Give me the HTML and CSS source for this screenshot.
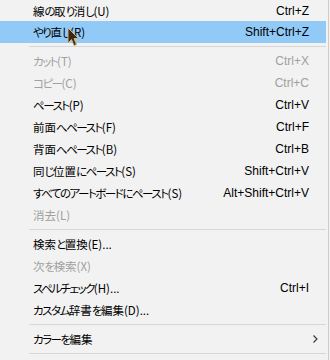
FILE: index.html
```html
<!DOCTYPE html>
<html lang="ja">
<head>
<meta charset="utf-8">
<link rel="stylesheet" href="styles.css">
</head>
<body>
<div class="menu">
  <ul class="items">
    <li class="item first"><span class="label">線<span class="k">の</span>取<span class="k">り</span>消<span class="k">し</span>(U)</span><span class="key">Ctrl+Z</span></li>
    <li class="item active"><span class="label"><span class="k">やり</span>直<span class="k">し</span>(R)</span><span class="key">Shift+Ctrl+Z</span></li>
    <li class="sep"></li>
    <li class="item disabled"><span class="label"><span class="k">カット</span>(T)</span><span class="key">Ctrl+X</span></li>
    <li class="item disabled"><span class="label"><span class="k">コピー</span>(C)</span><span class="key">Ctrl+C</span></li>
    <li class="item"><span class="label"><span class="k">ペースト</span>(P)</span><span class="key">Ctrl+V</span></li>
    <li class="item"><span class="label">前面<span class="k">へペースト</span>(F)</span><span class="key">Ctrl+F</span></li>
    <li class="item"><span class="label">背面<span class="k">へペースト</span>(B)</span><span class="key">Ctrl+B</span></li>
    <li class="item"><span class="label">同<span class="k">じ</span>位置<span class="k">にペースト</span>(S)</span><span class="key">Shift+Ctrl+V</span></li>
    <li class="item"><span class="label"><span class="k">すべてのアートボードにペースト</span>(S)</span><span class="key">Alt+Shift+Ctrl+V</span></li>
    <li class="item disabled"><span class="label">消去(L)</span></li>
    <li class="sep"></li>
    <li class="item"><span class="label">検索<span class="k">と</span>置換(E)...</span></li>
    <li class="item disabled"><span class="label">次<span class="k">を</span>検索(X)</span></li>
    <li class="item"><span class="label"><span class="k">スペルチェック</span>(H)...</span><span class="key">Ctrl+I</span></li>
    <li class="item"><span class="label"><span class="k">カスタム</span>辞書<span class="k">を</span>編集(D)...</span></li>
    <li class="sep"></li>
    <li class="item"><span class="label"><span class="k">カラーを</span>編集</span>
      <svg class="arrow" width="5" height="8" viewBox="0 0 5 8"><path d="M0.5 0.5 L4 4 L0.5 7.5" fill="none" stroke="#333" stroke-width="1.1"/></svg>
    </li>
    <li class="sep"></li>
  </ul>
  <svg class="cursor" width="13" height="20" viewBox="0 0 13 20">
    <path d="M1 1 L1 16 L4.5 12.5 L7 18.5 L9.5 17.5 L7 11.5 L11.5 11.5 Z" fill="#3a2812" stroke="#d8b078" stroke-width="1" stroke-linejoin="round"/>
  </svg>
</div>
</body>
</html>
```

FILE: styles.css
```css
html, body {
  margin: 0;
  padding: 0;
  background: #f2f2f2;
}

.menu {
  position: relative;
  width: 328px;
  height: 360px;
  border-right: 1px solid #cccccc;
  background: #f2f2f2;
  font-family: "Noto Sans CJK JP", sans-serif;
  font-size: 11.5px;
  color: #000;
}

.items {
  list-style: none;
  margin: 0;
  padding: 0;
}

.item {
  display: flex;
  align-items: center;
  justify-content: space-between;
  height: 22px;
  margin-right: 2px;
  padding-left: 33px;
  padding-right: 17px;
  box-sizing: border-box;
}

.item.first {
  height: 21px;
}

.item.active {
  background: #91c9f7;
}

.item.disabled {
  color: #a0a0a0;
}

.label {
  font-feature-settings: "palt" 1;
  white-space: nowrap;
}

.k {
  letter-spacing: -1.5px;
}

.key {
  font-family: "Liberation Sans", sans-serif;
  font-size: 12px;
  white-space: nowrap;
}

.arrow {
  margin-right: -9px;
}

.sep {
  height: 1px;
  margin: 3px 2px 3px 29px;
  background: #d7d7d7;
}

.cursor {
  position: absolute;
  left: 67px;
  top: 27px;
}
```
